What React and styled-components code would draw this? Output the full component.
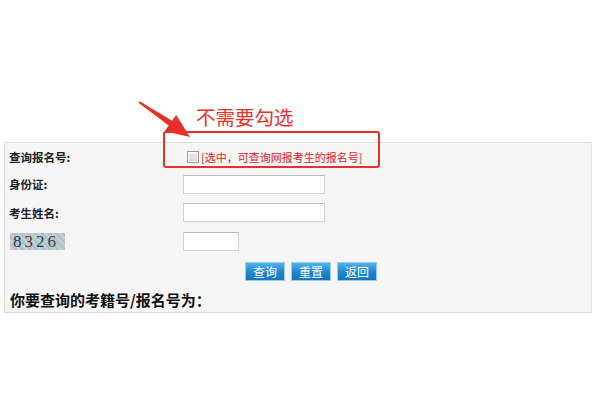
import React from "react";
import styled, { createGlobalStyle } from "styled-components";

const GlobalStyle = createGlobalStyle`
  body {
    margin: 0;
    background: #fff;
    font-family: "Noto Sans CJK SC", "Liberation Sans", sans-serif;
    color: #333;
  }
`;

const Page = styled.div`
  position: relative;
  width: 600px;
  height: 400px;
  padding: 142px 0 0 4px;
  box-sizing: border-box;
`;

const Panel = styled.div`
  width: 588px;
  background: #f5f5f5;
  border: 1px solid #dcdcdc;
  border-right-color: #e4e4e4;
  box-sizing: border-box;
  padding-left: 4px;
`;

const Row = styled.div`
  display: flex;
  align-items: center;
  height: ${(p) => p.h}px;
`;

const Label = styled.div`
  width: 174px;
  flex: none;
  font-size: 11.5px;
  font-weight: bold;
  color: #222;
`;

const Field = styled.div`
  display: flex;
  align-items: center;
  gap: ${(p) => p.gap || 0}px;
`;

const Check = styled.span`
  width: 10px;
  height: 10px;
  margin-left: 4px;
  border: 1px solid #9a9a9a;
  background: linear-gradient(#f0f0f0, #d6d6d6);
  box-shadow: inset 0 0 0 1px #fff;
`;

const Hint = styled.span`
  font-size: 11px;
  color: #e02020;
  margin-left: 2px;
`;

const Input = styled.span`
  display: block;
  width: ${(p) => p.w}px;
  height: 19px;
  background: #fff;
  border: 1px solid #d4d4d4;
  border-top-color: #bdbdbd;
  box-sizing: border-box;
`;

const Captcha = styled.span`
  display: flex;
  align-items: center;
  width: 55px;
  height: 17px;
  padding-left: 3px;
  box-sizing: border-box;
  margin-left: 1px;
  background: repeating-linear-gradient(45deg, #bccccd 0 2px, #cbd8d8 2px 3px, #b0c2c4 3px 5px);
  font-family: "Liberation Serif", "DejaVu Serif", serif;
  font-size: 17px;
  font-weight: normal;
  letter-spacing: 3px;
  line-height: 17px;
`;

const Digit = styled.span`
  color: ${(p) => p.c};
`;

const Button = styled.span`
  display: inline-flex;
  align-items: center;
  justify-content: center;
  width: 40px;
  height: 19px;
  font-size: 12px;
  color: #fff;
  background: linear-gradient(#4fb2ea, #1f86cf 55%, #1675bf);
  border: 1px solid #9ccbe8;
  box-sizing: border-box;
`;

const Result = styled.div`
  font-size: 15px;
  font-weight: bold;
  color: #111;
  padding-left: 1px;
`;

const Note = styled.div`
  position: absolute;
  left: 196px;
  top: 103px;
  font-size: 19.5px;
  color: #e8302a;
  line-height: 28px;
`;

const RedBox = styled.div`
  position: absolute;
  left: 163px;
  top: 131px;
  width: 217px;
  height: 37px;
  border: 2.5px solid #e8302a;
  border-radius: 3px;
  box-sizing: border-box;
`;

const Arrow = styled.svg`
  position: absolute;
  left: 0;
  top: 0;
`;

export default function App() {
  return (
    <>
      <GlobalStyle />
      <Page>
        <Panel>
          <Row h={27}>
            <Label>查询报名号:</Label>
            <Field>
              <Check />
              <Hint>[选中，可查询网报考生的报名号]</Hint>
            </Field>
          </Row>
          <Row h={28}>
            <Label>身份证:</Label>
            <Input w={142} />
          </Row>
          <Row h={29}>
            <Label>考生姓名:</Label>
            <Input w={142} />
          </Row>
          <Row h={29}>
            <Label>
              <Captcha>
                <Digit c="#24306a">8</Digit>
                <Digit c="#6a2a3a">3</Digit>
                <Digit c="#1d3c8a">2</Digit>
                <Digit c="#3a3f48">6</Digit>
              </Captcha>
            </Label>
            <Input w={56} />
          </Row>
          <Row h={30}>
            <Label />
            <Field gap={6} style={{ marginLeft: 62 }}>
              <Button>查询</Button>
              <Button>重置</Button>
              <Button>返回</Button>
            </Field>
          </Row>
          <Row h={26}>
            <Result>你要查询的考籍号/报名号为：</Result>
          </Row>
        </Panel>
        <Note>不需要勾选</Note>
        <RedBox />
        <Arrow width="600" height="400" viewBox="0 0 600 400">
          <polygon
            points="138.4,102.8 168.7,125.5 164.6,131.3 190,137 176.2,114.9 172.1,120.7 139.6,101.2"
            fill="#e8302a"
          />
        </Arrow>
      </Page>
    </>
  );
}
